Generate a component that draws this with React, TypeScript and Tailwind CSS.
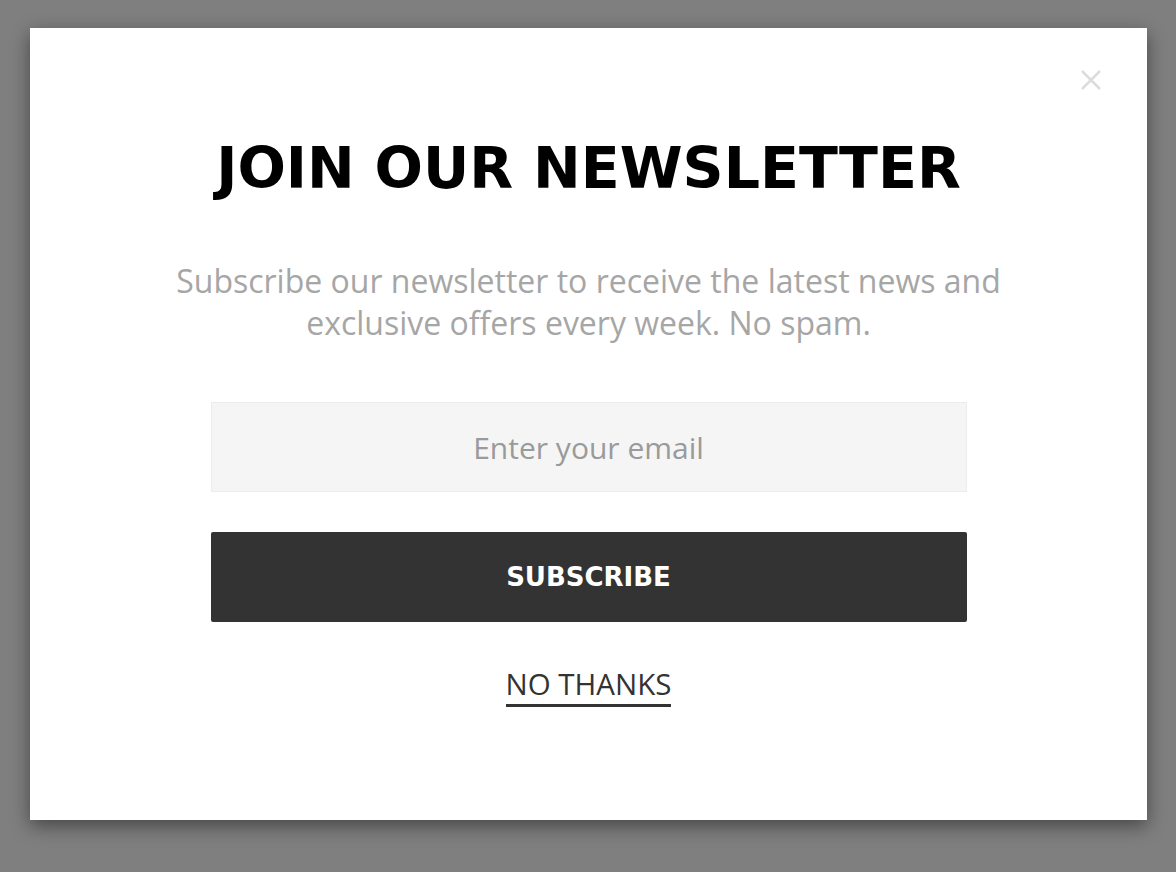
import { useState } from "react";

const NewsletterPopup = () => {
  const [email, setEmail] = useState("");
  const [open, setOpen] = useState(true);

  return (
    <div className="min-h-screen w-full bg-[#7f7f7f] pt-[28px] pl-[30px]">
      {open && (
        <div className="relative flex h-[792px] w-[1117px] flex-col items-center bg-white shadow-[0_6px_18px_rgba(0,0,0,0.45)]">
          {/* Close button */}
          <button
            className="absolute right-[44px] top-[40px] flex h-[24px] w-[24px] items-center justify-center text-[#dcdcdc]"
            onClick={() => setOpen(false)}
          >
            <svg width="22" height="22" viewBox="0 0 22 22" fill="none" stroke="currentColor" strokeWidth="2.5">
              <path d="M2 2 L20 20 M20 2 L2 20" />
            </svg>
          </button>

          <h2 className="mt-[104px] font-['DejaVu_Sans',sans-serif] text-[57px] font-bold leading-[72px] text-black">
            JOIN OUR NEWSLETTER
          </h2>

          <p className="mt-[56px] text-center font-['Open_Sans',sans-serif] text-[32px] leading-[42px] text-[#a6a6a6]">
            Subscribe our newsletter to receive the latest news and
            <br />
            exclusive offers every week. No spam.
          </p>

          {/* Email field */}
          <input
            type="email"
            value={email}
            onChange={(e) => setEmail(e.target.value)}
            placeholder="Enter your email"
            className="mt-[58px] h-[90px] w-[756px] border border-[#ececec] bg-[#f5f5f5] text-center font-['Open_Sans',sans-serif] text-[30px] text-[#555] outline-none placeholder:text-[#9a9a9a]"
          />

          <button className="mt-[40px] h-[90px] w-[756px] rounded-[2px] bg-[#333333] font-['DejaVu_Sans',sans-serif] text-[26px] font-bold text-white">
            SUBSCRIBE
          </button>

          <button
            className="mt-[44px] border-b-[3px] border-[#333] pb-[2px] font-['Open_Sans',sans-serif] text-[29.5px] leading-[36px] text-[#333]"
            onClick={() => setOpen(false)}
          >
            NO THANKS
          </button>
        </div>
      )}
    </div>
  );
};

export default function App() {
  return <NewsletterPopup />;
}
